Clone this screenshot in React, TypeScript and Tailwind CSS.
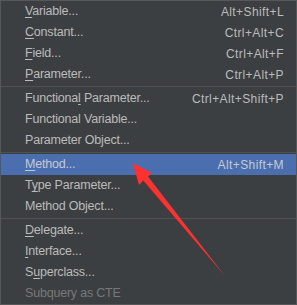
import React from 'react';

type Item = {
  label: React.ReactNode;
  shortcut?: string;
  selected?: boolean;
  disabled?: boolean;
};

const U = ({ children }: { children: React.ReactNode }) => (
  <span className="underline underline-offset-2 decoration-1">{children}</span>
);

const groups: Item[][] = [
  [
    { label: <><U>V</U>ariable...</>, shortcut: 'Alt+Shift+L' },
    { label: <><U>C</U>onstant...</>, shortcut: 'Ctrl+Alt+C' },
    { label: <><U>F</U>ield...</>, shortcut: 'Ctrl+Alt+F' },
    { label: <><U>P</U>arameter...</>, shortcut: 'Ctrl+Alt+P' },
  ],
  [
    { label: <>Functiona<U>l</U> Parameter...</>, shortcut: 'Ctrl+Alt+Shift+P' },
    { label: <>Functional Variable...</> },
    { label: <>Parameter Object...</> },
  ],
  [
    { label: <><U>M</U>ethod...</>, shortcut: 'Alt+Shift+M', selected: true },
    { label: <>T<U>y</U>pe Parameter...</> },
    { label: <>Method Object...</> },
  ],
  [
    { label: <><U>D</U>elegate...</> },
    { label: <><U>I</U>nterface...</> },
    { label: <>S<U>u</U>perclass...</> },
    { label: <>Subquery as CTE</>, disabled: true },
  ],
];

function Row({ item }: { item: Item }) {
  return (
    <div
      className={
        'flex h-[21px] items-center justify-between pl-6 pr-3 ' +
        (item.selected ? 'bg-[#4b6eaf] text-[#c6cbd3]' : item.disabled ? 'text-[#787878]' : 'text-[#bbbbbb]')
      }
    >
      <span className="text-[12.5px] tracking-[-0.2px]">{item.label}</span>
      {item.shortcut && <span className="tracking-[0.4px]">{item.shortcut}</span>}
    </div>
  );
}

export default function App() {
  return (
    <div className="relative h-[305px] w-[297px] overflow-hidden">
      <div
        className="h-full w-full border border-[#555759] bg-[#3c3f41] text-[12px]"
        style={{ fontFamily: '"Liberation Sans", Arial, sans-serif' }}
      >
        {groups.map((g, gi) => (
          <div key={gi}>
            {gi > 0 && (
              <div className="py-px">
                <div className="h-px bg-[#515151]" />
              </div>
            )}
            {g.map((item, i) => (
              <Row key={i} item={item} />
            ))}
          </div>
        ))}
      </div>
      <svg className="pointer-events-none absolute left-0 top-0" width="297" height="305">
        <polygon
          points="133,163 152,173 148,176.6 225,276 143.3,180.4 139,185"
          fill="#fe3131"
        />
      </svg>
    </div>
  );
}
